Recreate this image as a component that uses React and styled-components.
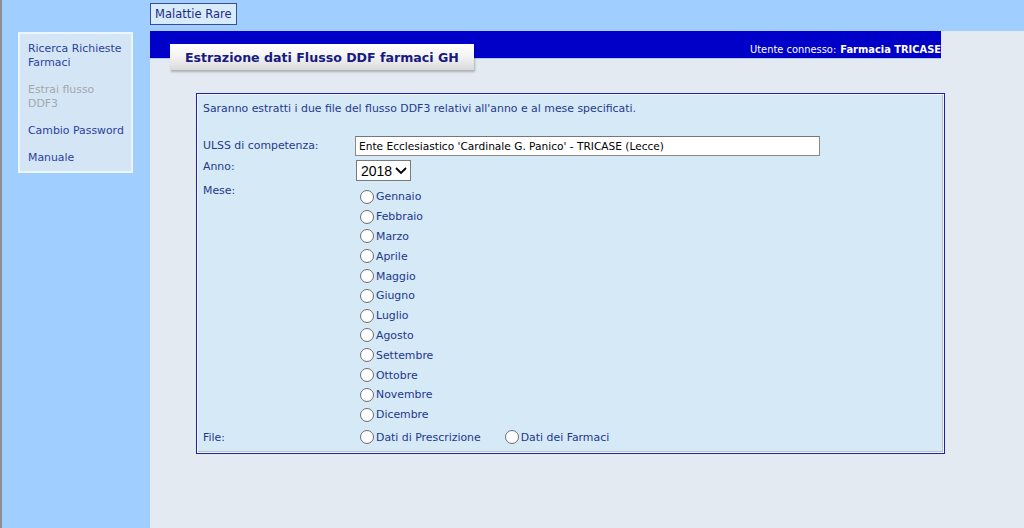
import React from 'react';
import styled, { createGlobalStyle } from 'styled-components';

const GlobalStyle = createGlobalStyle`
    html, body {
        margin: 0;
        padding: 0;
        height: 100%;
        overflow: hidden;
    }
    body {
        font-family: "DejaVu Sans", Verdana, sans-serif;
        font-size: 10.9px;
        background: #a0cfff;
    }
    #root { height: 100%; }
`;

const Page = styled.div`
    height: 528px;
    display: grid;
    grid-template-columns: 148px 1fr;
    grid-template-rows: 31px 1fr;
    border-left: 2px solid #8a8f96;
    box-sizing: border-box;
    background: #a0cfff;
`;

const TopBar = styled.div`
    grid-column: 1 / 3;
    padding: 3px 0 0 148px;
`;

const AppButton = styled.div`
    display: inline-block;
    height: 20px;
    line-height: 20px;
    padding: 0 4px;
    border: 1px solid #3c4c9c;
    background: #d8ebfb;
    color: #1c2a86;
    font-size: 11.5px;
`;

const Sidebar = styled.div`
    padding: 1px 0 0 16px;
`;

const Menu = styled.ul`
    list-style: none;
    margin: 0;
    width: 96px;
    padding: 8px 7px 6px 8px;
    background: #d4e6f6;
    border: 2px solid #eef6fd;
`;

const MenuItem = styled.li`
    color: ${p => (p.$disabled ? '#a3a7ad' : '#2c3f9c')};
    line-height: 14px;
    margin-bottom: 13px;
    &:last-child { margin-bottom: 0; }
`;

const Main = styled.div`
    background: #e4eaf1;
`;

const HeaderBar = styled.div`
    width: 791px;
    height: 28px;
    box-sizing: border-box;
    background: #0000c8;
    border-bottom: 1px solid #b8c8f0;
    display: flex;
    justify-content: flex-end;
    align-items: flex-end;
    padding-bottom: 3px;
    color: #ffffff;
    font-size: 9.9px;
    overflow: hidden;
    white-space: nowrap;
`;

const UserName = styled.b`
    margin-left: 4px;
`;

const TitleTab = styled.div`
    width: fit-content;
    margin: -15px 0 0 20px;
    padding: 0 15px 0 15px;
    height: 26px;
    line-height: 27px;
    background: linear-gradient(#ffffff, #f3f3f3 50%, #d9d9d9);
    box-shadow: 1px 2px 2px rgba(0, 0, 0, 0.25);
    color: #171a80;
    font-weight: bold;
    font-size: 12.6px;
    position: relative;
    white-space: nowrap;
`;

const Content = styled.div`
    padding: 23px 0 0 46px;
`;

const FormBox = styled.div`
    width: 749px;
    box-sizing: border-box;
    border: 1px solid #22229c;
    box-shadow: inset 0 0 0 1px #f4f8fc, inset -1px -1px 0 1px #b9c2cc;
    background: #d6e9f6;
    padding: 8px 6px 6px 6px;
    color: #1e3a8a;
`;

const Intro = styled.p`
    margin: 0 0 21px 0;
    line-height: 13px;
`;

const Row = styled.div`
    display: grid;
    grid-template-columns: 152px 1fr;
    align-items: start;
    margin-bottom: ${p => p.$gap || 0}px;
`;

const Label = styled.div`
    line-height: 14px;
    padding-top: ${p => p.$top || 0}px;
`;

const TextInput = styled.input`
    width: 465px;
    height: 20px;
    box-sizing: border-box;
    border: 1px solid #8a8a8a;
    border-top-color: #767676;
    background: #ffffff;
    padding: 0 3px;
    font-family: "DejaVu Sans", Verdana, sans-serif;
    font-size: 10.6px;
    color: #000000;
`;

const Select = styled.div`
    margin-left: 1px;
    width: 55px;
    height: 21px;
    box-sizing: border-box;
    border: 1px solid #7a7a7a;
    background: #ffffff;
    display: flex;
    align-items: center;
    justify-content: space-between;
    padding: 0 3px 0 4px;
    font-family: "Liberation Sans", Arial, sans-serif;
    font-size: 14px;
    color: #000000;
`;

const Options = styled.div`
    display: flex;
    flex-direction: ${p => (p.$row ? 'row' : 'column')};
    gap: ${p => (p.$row ? 19 : 0)}px;
    padding-top: ${p => (p.$row ? 0 : 3)}px;
`;

const Choice = styled.label`
    display: flex;
    align-items: center;
    height: 19.8px;
    color: #22378c;
`;

const Radio = styled.span`
    width: 12px;
    height: 12px;
    margin: 0 2px 0 5px;
    border-radius: 50%;
    border: 1px solid #6e6e6e;
    background: radial-gradient(circle at 50% 40%, #ffffff 55%, #eef0f3);
    flex: none;
`;

const months = [
    'Gennaio', 'Febbraio', 'Marzo', 'Aprile', 'Maggio', 'Giugno',
    'Luglio', 'Agosto', 'Settembre', 'Ottobre', 'Novembre', 'Dicembre',
];

const Chevron = () => (
    <svg width="12" height="9" viewBox="0 0 12 9">
        <path d="M1 2 L6 7 L11 2" fill="none" stroke="#000" strokeWidth="1.8" />
    </svg>
);

export default function App() {
    return (
        <>
            <GlobalStyle />
            <Page>
                <TopBar>
                    <AppButton>Malattie Rare</AppButton>
                </TopBar>
                <Sidebar>
                    <Menu>
                        <MenuItem>Ricerca Richieste Farmaci</MenuItem>
                        <MenuItem $disabled>Estrai flusso DDF3</MenuItem>
                        <MenuItem>Cambio Password</MenuItem>
                        <MenuItem>Manuale</MenuItem>
                    </Menu>
                </Sidebar>
                <Main>
                    <HeaderBar>
                        Utente connesso: <UserName>Farmacia TRICASE</UserName>
                    </HeaderBar>
                    <TitleTab>Estrazione dati Flusso DDF farmaci GH</TitleTab>
                    <Content>
                        <FormBox>
                            <Intro>
                                Saranno estratti i due file del flusso DDF3 relativi all'anno e al mese specificati.
                            </Intro>
                            <Row $gap={4}>
                                <Label $top={3}>ULSS di competenza:</Label>
                                <TextInput readOnly value="Ente Ecclesiastico 'Cardinale G. Panico' - TRICASE (Lecce)" />
                            </Row>
                            <Row $gap={3}>
                                <Label>Anno:</Label>
                                <Select>2018 <Chevron /></Select>
                            </Row>
                            <Row $gap={3}>
                                <Label>Mese:</Label>
                                <Options>
                                    {months.map(m => (
                                        <Choice key={m}><Radio />{m}</Choice>
                                    ))}
                                </Options>
                            </Row>
                            <Row>
                                <Label $top={3}>File:</Label>
                                <Options $row>
                                    <Choice><Radio />Dati di Prescrizione</Choice>
                                    <Choice><Radio />Dati dei Farmaci</Choice>
                                </Options>
                            </Row>
                        </FormBox>
                    </Content>
                </Main>
            </Page>
        </>
    );
}
